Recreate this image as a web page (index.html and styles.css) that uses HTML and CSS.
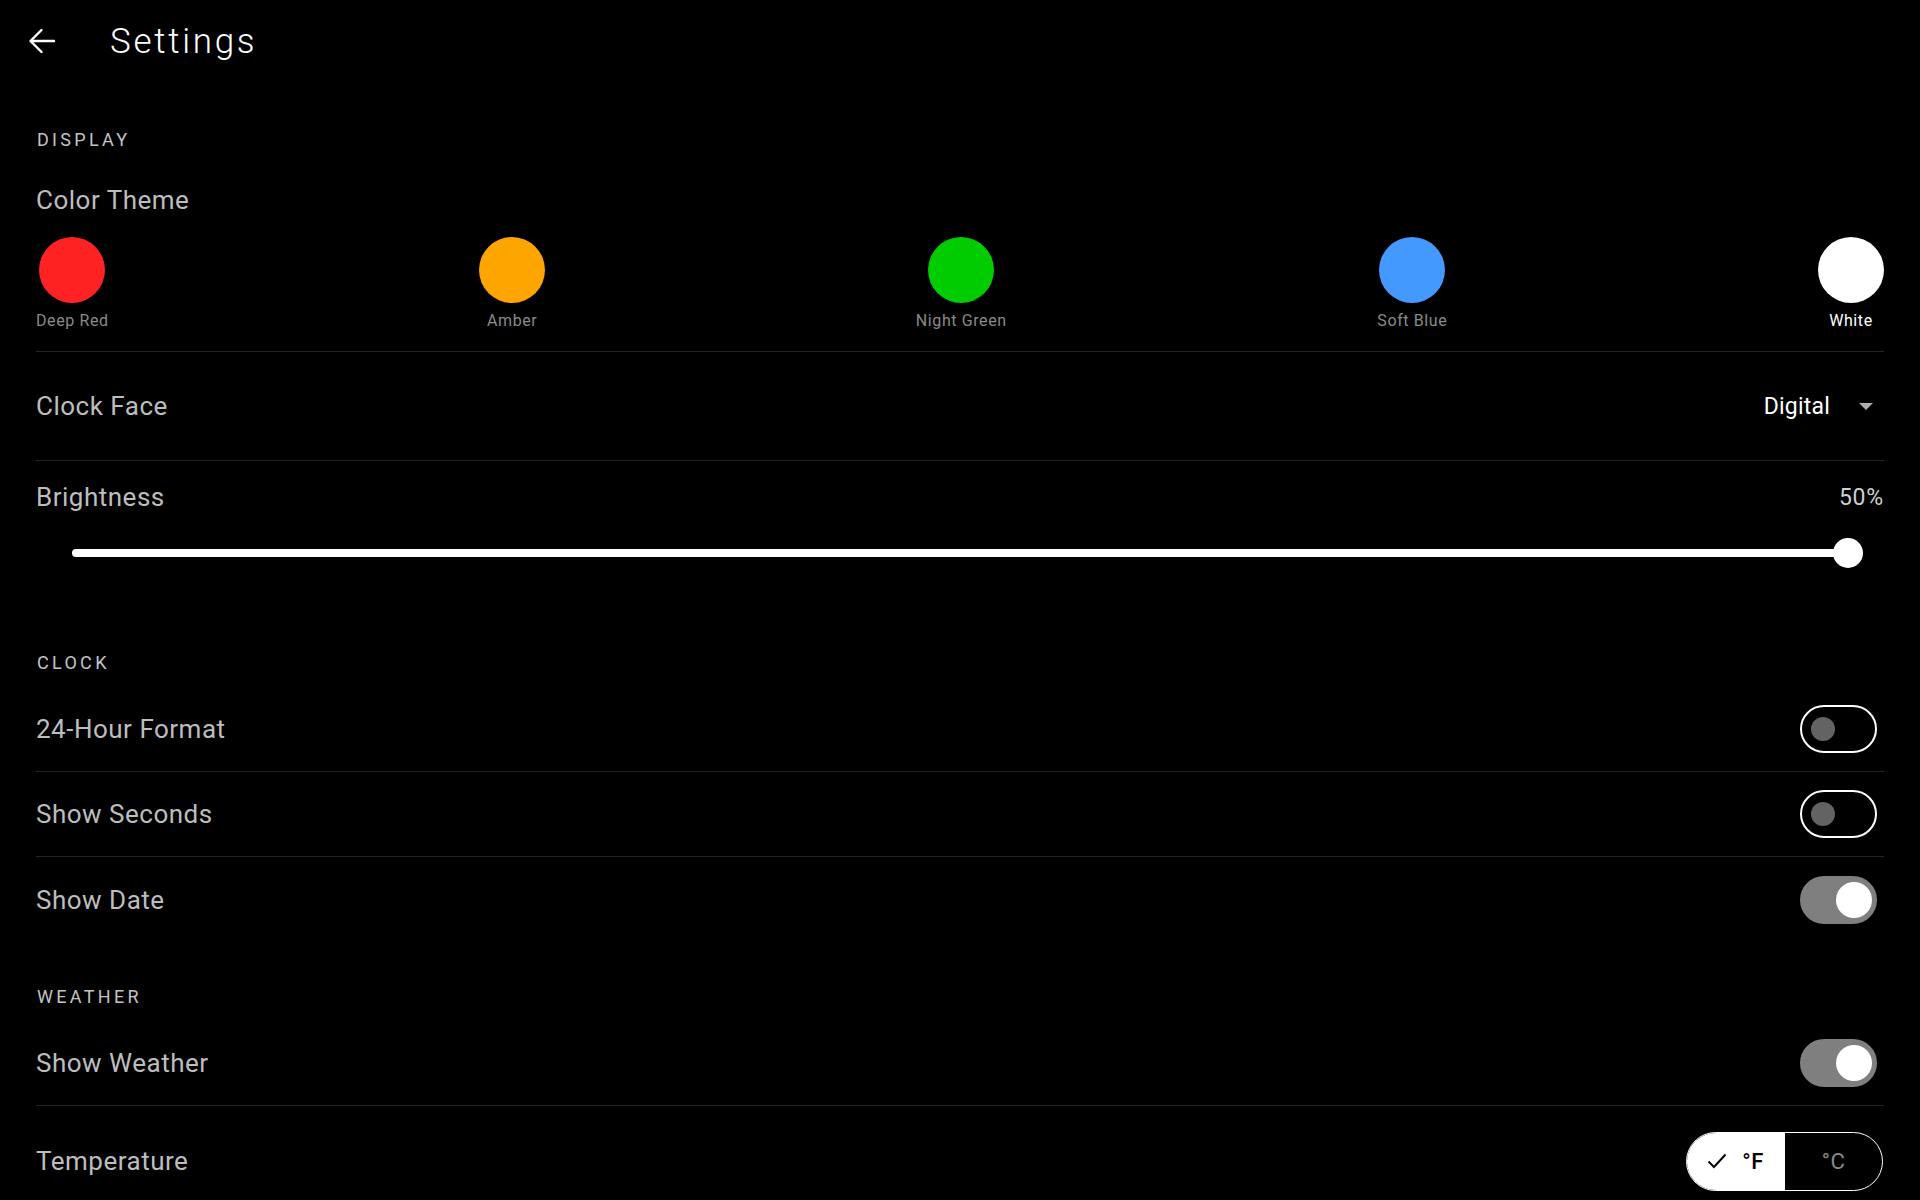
FILE: index.html
```html
<!DOCTYPE html>
<html lang="en">
<head>
<meta charset="utf-8">
<title>Settings</title>
<link rel="stylesheet" href="styles.css">
</head>
<body>
<header class="topbar">
  <button class="back-btn" aria-label="Back">
    <svg viewBox="0 0 36 36" width="36" height="36"><path d="M30 18H7M17.5 7L6.5 18l11 11" fill="none" stroke="#fff" stroke-width="2.4" stroke-linecap="round" stroke-linejoin="round"/></svg>
  </button>
  <h1 class="page-title">Settings</h1>
</header>
<main class="content">
  <section class="group group-display">
    <h2 class="group-title">DISPLAY</h2>
    <div class="theme-block">
      <div class="setting-label">Color Theme</div>
      <div class="swatches">
        <div class="swatch"><span class="swatch-dot dot-red"></span><span class="swatch-name">Deep Red</span></div>
        <div class="swatch"><span class="swatch-dot dot-amber"></span><span class="swatch-name">Amber</span></div>
        <div class="swatch"><span class="swatch-dot dot-green"></span><span class="swatch-name">Night Green</span></div>
        <div class="swatch"><span class="swatch-dot dot-blue"></span><span class="swatch-name">Soft Blue</span></div>
        <div class="swatch is-selected"><span class="swatch-dot dot-white"></span><span class="swatch-name">White</span></div>
      </div>
    </div>
    <div class="setting-row row-tall">
      <span class="setting-label">Clock Face</span>
      <div class="select"><span class="select-value">Digital</span><span class="select-caret"></span></div>
    </div>
    <div class="brightness">
      <div class="brightness-head"><span class="setting-label">Brightness</span><span class="brightness-value">50%</span></div>
      <div class="slider"><div class="slider-track"></div><div class="slider-thumb"></div></div>
    </div>
  </section>

  <section class="group group-clock">
    <h2 class="group-title">CLOCK</h2>
    <div class="setting-row">
      <span class="setting-label">24-Hour Format</span>
      <div class="switch"><span class="switch-thumb"></span></div>
    </div>
    <div class="setting-row">
      <span class="setting-label">Show Seconds</span>
      <div class="switch"><span class="switch-thumb"></span></div>
    </div>
    <div class="setting-row">
      <span class="setting-label">Show Date</span>
      <div class="switch is-on"><span class="switch-thumb"></span></div>
    </div>
  </section>

  <section class="group group-weather">
    <h2 class="group-title">WEATHER</h2>
    <div class="setting-row">
      <span class="setting-label">Show Weather</span>
      <div class="switch is-on"><span class="switch-thumb"></span></div>
    </div>
    <div class="setting-row row-temp">
      <span class="setting-label">Temperature</span>
      <div class="segmented">
        <div class="segment is-active">
          <svg class="check" viewBox="0 0 20 20" width="20" height="20"><path d="M1.5 10.5L7 16 18.5 3.5" fill="none" stroke="#000" stroke-width="2"/></svg>
          <span>°F</span>
        </div>
        <div class="segment"><span>°C</span></div>
      </div>
    </div>
  </section>
</main>
</body>
</html>
```

FILE: styles.css
```css
* { box-sizing: border-box; }

html, body {
  margin: 0;
  padding: 0;
  background: #000;
  overflow: hidden;
}

body {
  width: 1920px;
  height: 1200px;
  font-family: Roboto, "Noto Sans", "Liberation Sans", sans-serif;
  color: #fff;
}

.topbar {
  height: 82px;
  display: flex;
  align-items: center;
  padding-left: 24px;
}

.back-btn {
  width: 36px;
  height: 36px;
  padding: 0;
  border: 0;
  background: none;
  display: flex;
}

.page-title {
  margin: 0 0 0 50px;
  font-size: 35px;
  font-weight: 300;
  letter-spacing: 2.7px;
  line-height: 1;
}

.content {
  padding: 0 36px;
}

.group-display { padding-top: 46px; }
.group-clock { padding-top: 45px; }
.group-weather { padding-top: 43px; }

.group-title {
  margin: 0 0 12px;
  padding-left: 1px;
  font-size: 18px;
  font-weight: 400;
  line-height: 24px;
  letter-spacing: 3.3px;
  color: #c4c4c4;
}

.setting-label {
  font-size: 26px;
  line-height: 32px;
  letter-spacing: 0.5px;
  color: #bdbdbd;
}

.theme-block {
  padding: 20px 0 20px;
  border-bottom: 1px solid #222;
}

.swatches {
  margin-top: 21px;
  display: flex;
  justify-content: space-between;
}

.swatch {
  display: flex;
  flex-direction: column;
  align-items: center;
  gap: 8px;
}

.swatch-dot {
  width: 66px;
  height: 66px;
  border-radius: 50%;
}

.dot-red { background: #ff2222; }
.dot-amber { background: #ffa500; }
.dot-green { background: #00cc00; }
.dot-blue { background: #4499ff; }
.dot-white { background: #ffffff; }

.swatch-name {
  font-size: 16px;
  line-height: 20px;
  letter-spacing: 0.6px;
  color: #8a8a8a;
}

.swatch.is-selected .swatch-name { color: #fff; }

.setting-row {
  height: 85px;
  display: flex;
  align-items: center;
  justify-content: space-between;
  border-bottom: 1px solid #222;
}

.setting-row:last-child { border-bottom: 0; }

.row-tall { height: 109px; }
.row-temp { height: 110px; }

.select {
  display: flex;
  align-items: center;
  padding-right: 11px;
}

.select-value {
  font-size: 23px;
  letter-spacing: 0.2px;
  color: #fff;
}

.select-caret {
  margin-left: 29px;
  width: 0;
  height: 0;
  border-left: 7px solid transparent;
  border-right: 7px solid transparent;
  border-top: 7px solid #b0b0b0;
}

.brightness {
  padding: 19px 0 36px;
}

.brightness-head {
  height: 34px;
  display: flex;
  align-items: center;
  justify-content: space-between;
}

.brightness-value {
  font-size: 23px;
  letter-spacing: 0.8px;
  color: #cfcfcf;
}

.slider {
  position: relative;
  height: 34px;
  margin: 22px 36px 0;
  display: flex;
  align-items: center;
}

.slider-track {
  width: 100%;
  height: 8px;
  border-radius: 4px;
  background: #fff;
}

.slider-thumb {
  position: absolute;
  right: -15px;
  top: 2px;
  width: 30px;
  height: 30px;
  border-radius: 50%;
  background: #fff;
}

.switch {
  width: 77px;
  height: 48px;
  margin-right: 7px;
  padding: 0 9px;
  border: 2px solid #fff;
  border-radius: 24px;
  display: flex;
  align-items: center;
}

.switch-thumb {
  width: 24px;
  height: 24px;
  border-radius: 50%;
  background: #636363;
}

.switch.is-on {
  background: #7f7f7f;
  border-color: #7f7f7f;
  justify-content: flex-end;
  padding: 0 3px;
}

.switch.is-on .switch-thumb {
  width: 36px;
  height: 36px;
  background: #fff;
}

.segmented {
  width: 197px;
  height: 59px;
  margin-right: 1px;
  display: flex;
  border: 1px solid #fff;
  border-radius: 30px;
  overflow: hidden;
}

.segment {
  flex: 1;
  display: flex;
  align-items: center;
  justify-content: center;
  gap: 15px;
  font-size: 22px;
  letter-spacing: 0.6px;
  color: #8a8a8a;
}

.segment + .segment { border-left: 1px solid #fff; }

.segment.is-active {
  background: #fff;
  color: #000;
  font-weight: 500;
}

.check { display: block; }
```
